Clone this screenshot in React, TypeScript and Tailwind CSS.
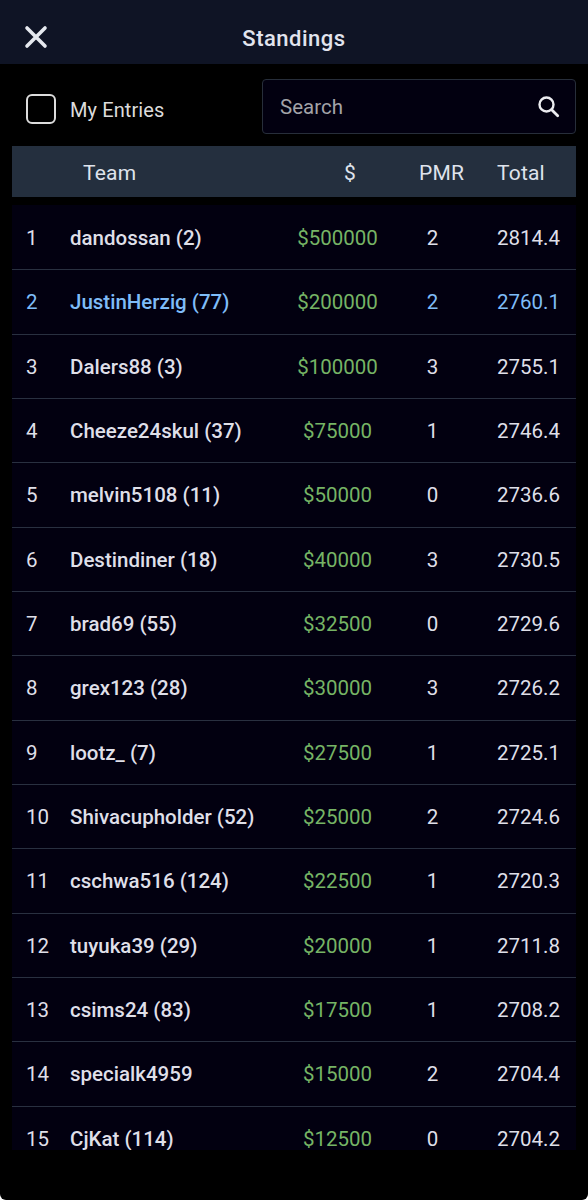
import clsx from 'clsx'

type Entry = {
  team: string
  prize: number
  pmr: number
  total: string
  mine?: boolean
}

const entries: Entry[] = [
  { team: 'dandossan (2)', prize: 500000, pmr: 2, total: '2814.4' },
  { team: 'JustinHerzig (77)', prize: 200000, pmr: 2, total: '2760.1', mine: true },
  { team: 'Dalers88 (3)', prize: 100000, pmr: 3, total: '2755.1' },
  { team: 'Cheeze24skul (37)', prize: 75000, pmr: 1, total: '2746.4' },
  { team: 'melvin5108 (11)', prize: 50000, pmr: 0, total: '2736.6' },
  { team: 'Destindiner (18)', prize: 40000, pmr: 3, total: '2730.5' },
  { team: 'brad69 (55)', prize: 32500, pmr: 0, total: '2729.6' },
  { team: 'grex123 (28)', prize: 30000, pmr: 3, total: '2726.2' },
  { team: 'lootz_ (7)', prize: 27500, pmr: 1, total: '2725.1' },
  { team: 'Shivacupholder (52)', prize: 25000, pmr: 2, total: '2724.6' },
  { team: 'cschwa516 (124)', prize: 22500, pmr: 1, total: '2720.3' },
  { team: 'tuyuka39 (29)', prize: 20000, pmr: 1, total: '2711.8' },
  { team: 'csims24 (83)', prize: 17500, pmr: 1, total: '2708.2' },
  { team: 'specialk4959', prize: 15000, pmr: 2, total: '2704.4' },
  { team: 'CjKat (114)', prize: 12500, pmr: 0, total: '2704.2' },
]

function Header() {
  return (
    <header className="grid h-16 shrink-0 grid-cols-[72px_1fr_72px] items-center bg-[#0f1425] pt-[11px]">
      <button type="button" aria-label="Close" className="pb-0.5 pl-6">
        <svg viewBox="0 0 24 24" className="h-6 w-6" fill="none" stroke="#e6e9ef" strokeWidth="3.6" strokeLinecap="round">
          <path d="M3 3l18 18M21 3L3 21" />
        </svg>
      </button>
      <h1 className="pt-0.5 text-center text-[22px] leading-7 font-medium tracking-[0.5px] text-[#e2e4ee]">Standings</h1>
    </header>
  )
}

function Filters() {
  return (
    <div className="flex items-start justify-between pt-[15px] pr-3 pl-[26px]">
      <label className="flex items-center gap-[14px] pt-[15px]">
        <span className="h-[30px] w-[30px] rounded-md border-2 border-[#dcdcdc]" />
        <span className="pt-0.5 text-[20px] leading-6 tracking-[0.1px] text-[#dcdcdc]">My Entries</span>
      </label>
      <div className="flex h-[55px] w-[314px] items-center justify-between rounded-[4px] border border-[#272e3a] bg-[#020010] pr-[15px] pl-[17px]">
        <span className="text-[20.5px] leading-6 text-[#a3a3a8]">Search</span>
        <svg viewBox="0 0 22 22" className="h-[22px] w-[22px]" fill="none" stroke="#ececf0" strokeWidth="2.4">
          <circle cx="8.5" cy="8.5" r="7" />
          <path d="M13.7 13.7l6 6" strokeWidth="2.8" strokeLinecap="round" />
        </svg>
      </div>
    </div>
  )
}

function Row({ entry, rank }: { entry: Entry; rank: number }) {
  return (
    <li
      className={clsx(
        'grid h-[64.33px] grid-cols-[58px_215px_105px_85px_1fr] items-center border-b border-[#293040] pt-px',
        entry.mine ? 'text-[#7fbcf8]' : 'text-[#dfdfe8]',
      )}
    >
      <span className="pl-3.5">{rank}</span>
      <span className="font-medium">{entry.team}</span>
      <span className="text-center text-[#76b465]">${entry.prize}</span>
      <span className="text-center">{entry.pmr}</span>
      <span className="pl-[22px]">{entry.total}</span>
    </li>
  )
}

export default function App() {
  return (
    <div className="h-[1200px] w-[588px] bg-white font-['Roboto',sans-serif]">
      <div className="flex h-full flex-col overflow-hidden rounded-b-[6px] bg-black">
        <Header />
        <Filters />
        <div className="mx-3 mt-3 grid h-[51px] shrink-0 grid-cols-[71px_242px_94px_78px_1fr] items-center bg-[#242f3e] pt-1 text-[21px] tracking-[0.2px] text-[#dfe3ec]">
          <span />
          <span>Team</span>
          <span className="pl-[19px]">$</span>
          <span>PMR</span>
          <span>Total</span>
        </div>
        <ul className="mx-3 mt-2 h-[945px] shrink-0 overflow-hidden bg-[#020010] pt-px text-[20.5px] leading-6">
          {entries.map((entry, i) => (
            <Row key={entry.team} entry={entry} rank={i + 1} />
          ))}
        </ul>
      </div>
    </div>
  )
}
